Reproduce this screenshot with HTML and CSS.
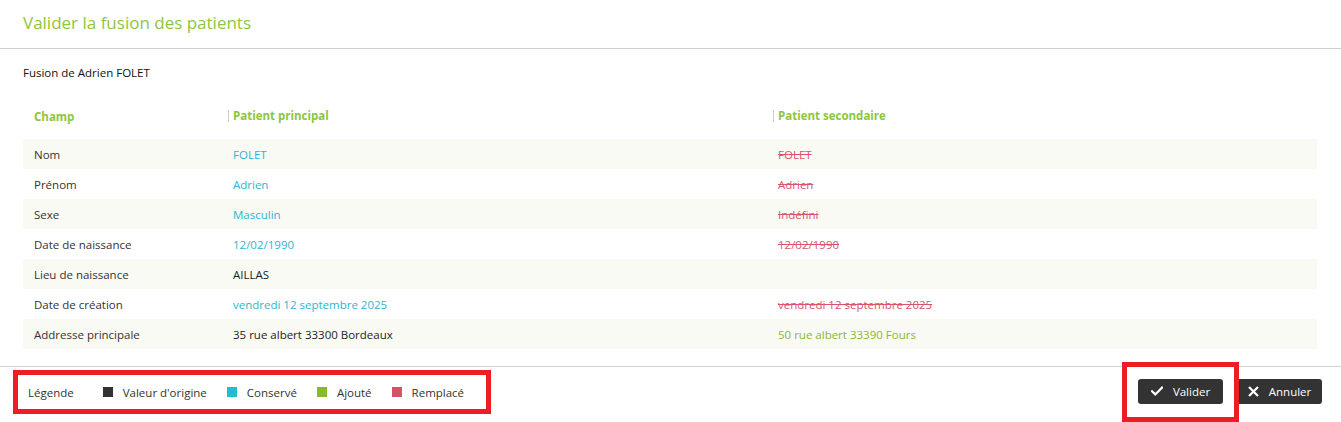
FILE: index.html
```html
<!DOCTYPE html>
<html lang="fr">
<head>
<meta charset="utf-8">
<title>Valider la fusion des patients</title>
<link rel="stylesheet" href="styles.css">
</head>
<body>
<div class="modal">
  <header class="modal-header">
    <h1 class="modal-title">Valider la fusion des patients</h1>
  </header>
  <main class="modal-body">
    <p class="subtitle">Fusion de Adrien FOLET</p>
    <div class="merge-table">
      <div class="row head">
        <div class="cell">Champ</div>
        <div class="cell sep">Patient principal</div>
        <div class="cell sep">Patient secondaire</div>
      </div>
      <div class="row odd">
        <div class="cell">Nom</div>
        <div class="cell kept">FOLET</div>
        <div class="cell replaced">FOLET</div>
      </div>
      <div class="row">
        <div class="cell">Prénom</div>
        <div class="cell kept">Adrien</div>
        <div class="cell replaced">Adrien</div>
      </div>
      <div class="row odd">
        <div class="cell">Sexe</div>
        <div class="cell kept">Masculin</div>
        <div class="cell replaced">Indéfini</div>
      </div>
      <div class="row">
        <div class="cell">Date de naissance</div>
        <div class="cell kept">12/02/1990</div>
        <div class="cell replaced">12/02/1990</div>
      </div>
      <div class="row odd">
        <div class="cell">Lieu de naissance</div>
        <div class="cell origin">AILLAS</div>
        <div class="cell"></div>
      </div>
      <div class="row">
        <div class="cell">Date de création</div>
        <div class="cell kept">vendredi 12 septembre 2025</div>
        <div class="cell replaced">vendredi 12 septembre 2025</div>
      </div>
      <div class="row odd">
        <div class="cell">Addresse principale</div>
        <div class="cell origin">35 rue albert 33300 Bordeaux</div>
        <div class="cell added">50 rue albert 33390 Fours</div>
      </div>
    </div>
  </main>
  <footer class="modal-footer">
    <div class="legend">
      <span class="legend-title">Légende</span>
      <span class="legend-item"><span class="swatch sw-origin"></span>Valeur d'origine</span>
      <span class="legend-item"><span class="swatch sw-kept"></span>Conservé</span>
      <span class="legend-item"><span class="swatch sw-added"></span>Ajouté</span>
      <span class="legend-item"><span class="swatch sw-replaced"></span>Remplacé</span>
    </div>
    <div class="actions">
      <span class="highlight">
        <button class="btn" type="button">
          <svg class="icon" width="12" height="10" viewBox="0 0 12 10"><polyline points="1,5.2 4.3,8.4 11,1.6" fill="none" stroke="#fff" stroke-width="2.2" stroke-linecap="square"/></svg>
          Valider
        </button>
      </span>
      <button class="btn" type="button">
        <svg class="icon" width="11" height="11" viewBox="0 0 11 11"><path d="M1 1 L10 10 M10 1 L1 10" fill="none" stroke="#fff" stroke-width="2.2"/></svg>
        Annuler
      </button>
    </div>
  </footer>
</div>
</body>
</html>
```

FILE: styles.css
```css
html, body {
  margin: 0;
  padding: 0;
  background: #fff;
}
body {
  font-family: "Open Sans", "Noto Sans", "Liberation Sans", sans-serif;
  font-size: 11.5px;
  color: #222;
}
.modal {
  width: 1341px;
  height: 422px;
  display: flex;
  flex-direction: column;
  overflow: hidden;
}
.modal-header {
  border-bottom: 1px solid #cfcfcf;
  padding: 0 23px;
  display: flex;
  align-items: center;
  box-sizing: border-box;
  height: 49px;
}
.modal-title {
  margin: 0 0 3px 0;
  font-size: 17px;
  font-weight: 400;
  color: #8cc63f;
}
.modal-body {
  padding: 0 24px 0 23px;
  flex: 1;
}
.subtitle {
  margin: 16px 0 0 0;
  line-height: 16px;
  color: #111;
}
.merge-table {
  margin-top: 23px;
}
.row {
  display: grid;
  grid-template-columns: 205px 545px 1fr;
  height: 30px;
  align-items: center;
}
.row.head {
  height: 24px;
  margin-bottom: 11px;
}
.row.odd {
  background: #f9faf4;
}
.cell {
  padding-left: 11px;
  color: #333;
  white-space: nowrap;
}
.row .cell + .cell {
  padding-left: 5px;
}
.head .cell {
  font-weight: 700;
  color: #8cc63f;
}
.head .cell.sep {
  border-left: 1px solid #cfcfcf;
  line-height: 12px;
  padding-left: 4px;
}
.kept {
  color: #2cb5d3 !important;
}
.origin {
  color: #222 !important;
}
.added {
  color: #8ab830 !important;
}
.replaced {
  color: #d9546c !important;
  text-decoration: line-through;
}
.modal-footer {
  height: 56px;
  border-top: 1px solid #cfcfcf;
  display: flex;
  align-items: flex-start;
  justify-content: space-between;
  padding: 3px 19px 0 13px;
  box-sizing: border-box;
}
.legend {
  border: 5px solid #ee1c25;
  height: 44px;
  width: 478px;
  box-sizing: border-box;
  display: flex;
  align-items: center;
  padding-left: 10px;
  gap: 20px;
  color: #333;
}
.legend-title {
  margin-right: 9px;
}
.legend-item {
  display: inline-flex;
  align-items: center;
  gap: 10px;
}
.swatch {
  width: 10px;
  height: 10px;
  display: inline-block;
}
.sw-origin { background: #333; }
.sw-kept { background: #22bbd2; }
.sw-added { background: #88bb28; }
.sw-replaced { background: #d45367; }
.actions {
  display: flex;
  align-items: center;
  gap: 14px;
  margin-top: 9px;
}
.highlight {
  position: relative;
  display: inline-flex;
}
.highlight::after {
  content: "";
  position: absolute;
  left: -16px;
  right: -16px;
  top: -17px;
  bottom: -18px;
  border: 5px solid #ee1c25;
  pointer-events: none;
}
.btn {
  height: 25px;
  width: 85px;
  background: #333;
  color: #fff;
  border: 0;
  border-radius: 3px;
  font-family: inherit;
  font-size: 11.5px;
  display: inline-flex;
  align-items: center;
  justify-content: center;
  gap: 10px;
  padding: 0 0 1px 0;
  cursor: pointer;
}
.icon {
  display: block;
}
```
